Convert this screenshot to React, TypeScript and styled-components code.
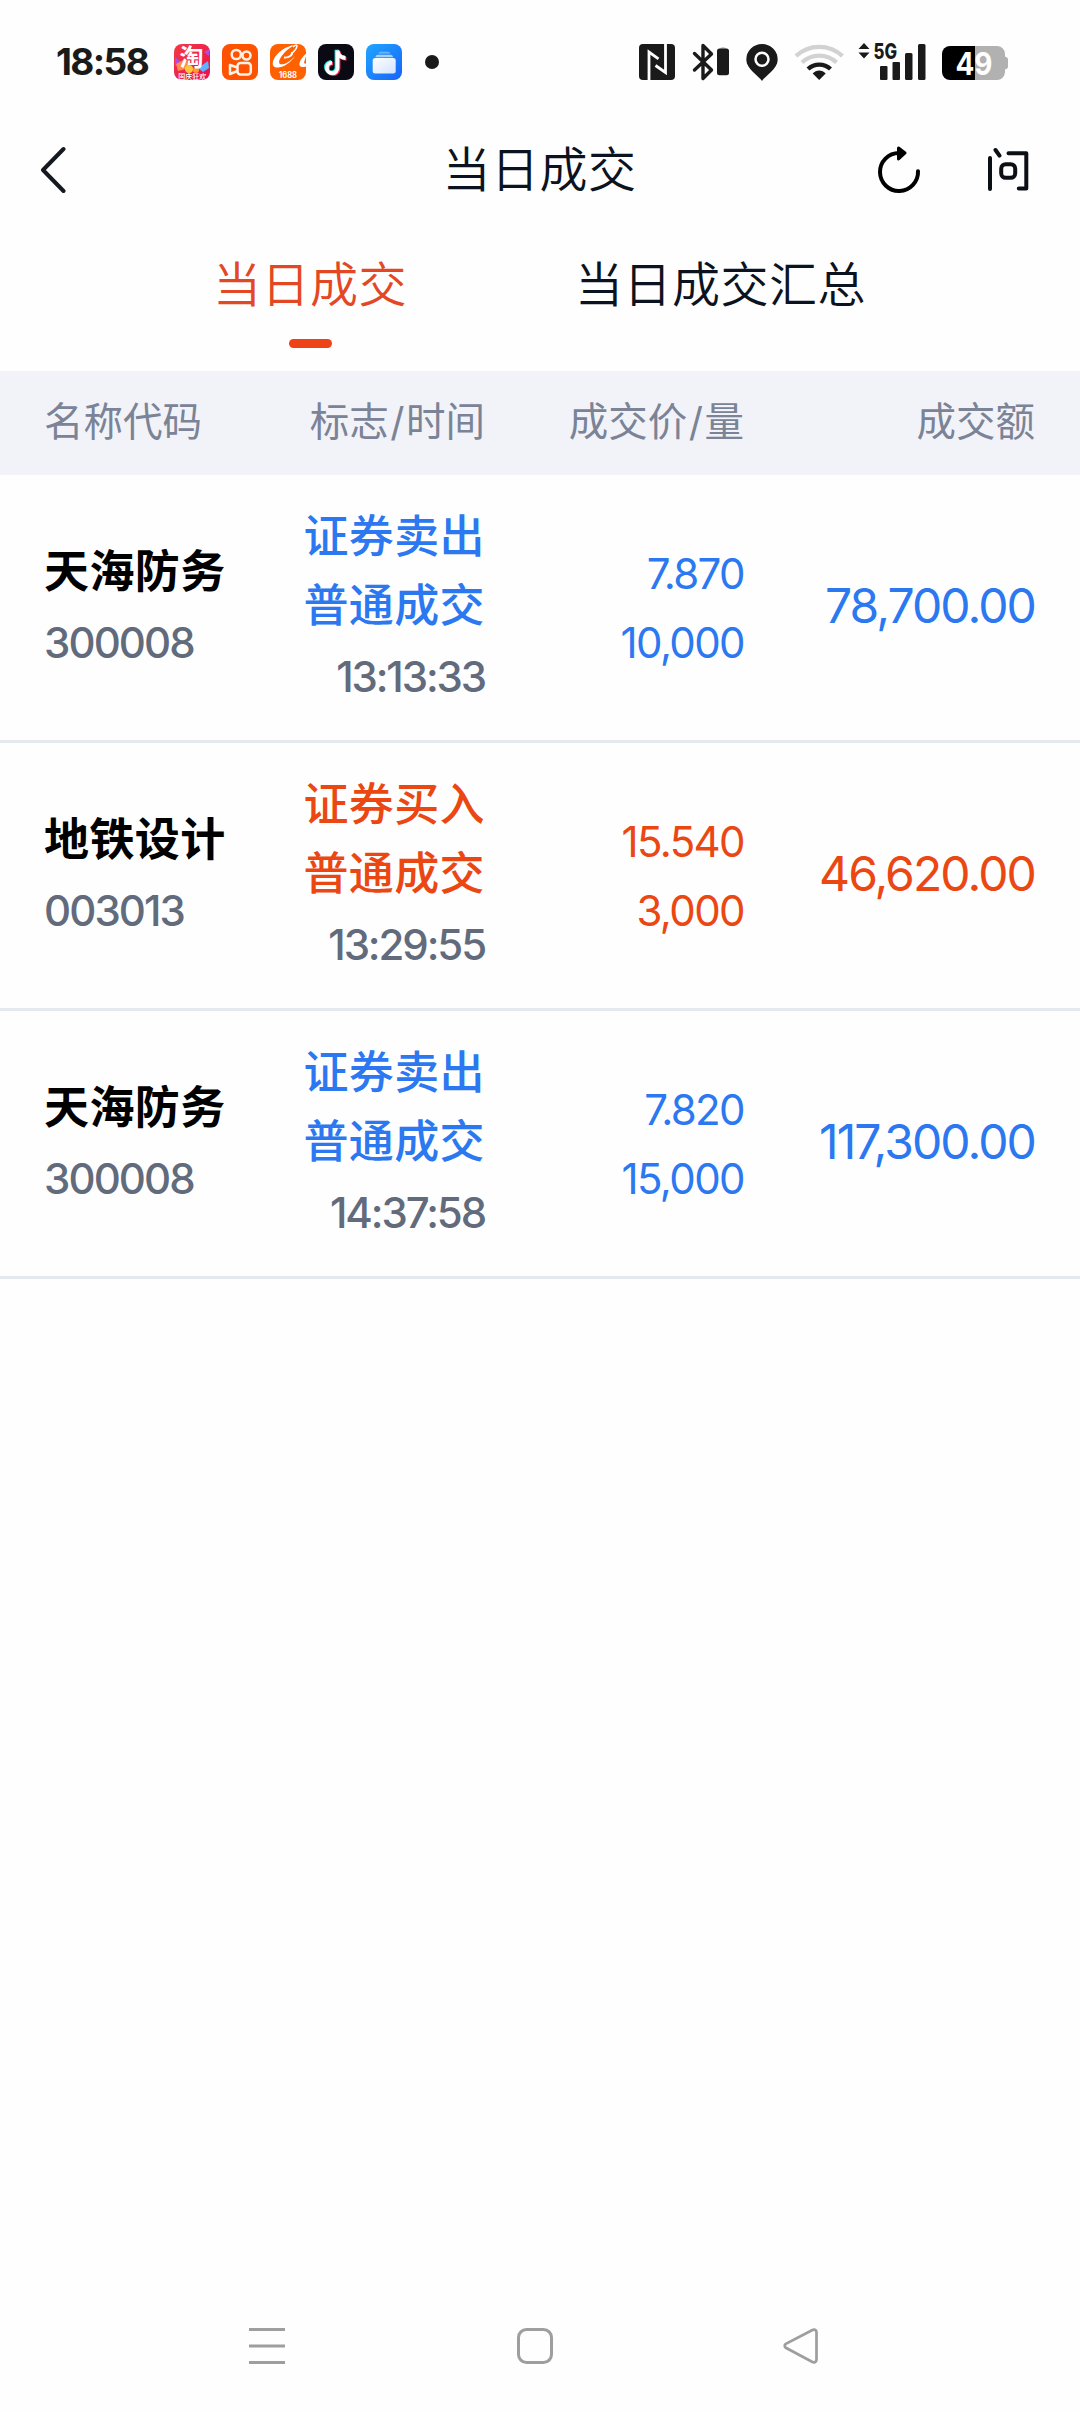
import React from "react";
import styled, { createGlobalStyle } from "styled-components";

const GlobalStyle = createGlobalStyle`
  *, *::before, *::after { box-sizing: border-box; }
  body {
    margin: 0;
    background: #fefefe;
    color: #0c1320;
    font-family: Inter, "Noto Sans CJK SC", sans-serif;
  }
  svg { display: block; flex: none; }
  button { border: 0; padding: 0; background: none; font: inherit; color: inherit; }
`;

const BLUE = "#2b78f0";
const ORANGE = "#ea4713";

const Screen = styled.div`
  display: flex;
  flex-direction: column;
  width: 1080px;
  height: 2412px;
  overflow: hidden;
`;

const StatusBar = styled.header`
  display: flex;
  justify-content: space-between;
  align-items: center;
  height: 124px;
  padding: 0 72px 0 56px;
  color: #1a1a1a;
`;

const StatusGroup = styled.div`
  display: flex;
  align-items: center;
`;

const Clock = styled.span`
  width: 118px;
  font-size: 37px;
  line-height: 44px;
  font-weight: 650;
  letter-spacing: -1.6px;
  white-space: nowrap;
`;

const AppIcons = styled.div`
  display: flex;
  align-items: center;
  gap: 12px;
`;

const MoreDot = styled.i`
  width: 14px;
  height: 14px;
  margin-left: 23px;
  border-radius: 50%;
  background: #1a1a1a;
`;

const TitleBar = styled.div`
  display: grid;
  grid-template-columns: 1fr auto 1fr;
  align-items: center;
  height: 92px;
  padding: 0 50px 0 40px;
`;

const Title = styled.h1`
  margin: 0;
  padding-left: 9px;
  font-size: 48px;
  line-height: 72px;
  font-weight: 350;
  letter-spacing: 0.5px;
`;

const Actions = styled.div`
  display: flex;
  justify-content: flex-end;
  gap: 65px;
`;

const Tabs = styled.nav`
  display: flex;
  justify-content: space-between;
  height: 155px;
  padding: 33px 214px 0 213px;
`;

const Tab = styled.button<{ $active?: boolean }>`
  display: flex;
  flex-direction: column;
  align-items: center;
  height: 110px;
  color: ${(p) => (p.$active ? "#e34824" : "#0c1320")};
  font-size: 48px;
  line-height: 72px;
  font-weight: 350;
  letter-spacing: 0.5px;

  &::after {
    content: "";
    width: 43px;
    height: 9px;
    margin-top: 18px;
    border-radius: 5px;
    background: ${(p) => (p.$active ? "#ee4219" : "transparent")};
  }
`;

const rowGrid = `
  display: grid;
  grid-template-columns: 182px 259px 259px 291px;
  align-items: center;
  padding: 0 45px 0 44px;
`;

const TableHead = styled.div`
  ${rowGrid}
  height: 104px;
  padding-bottom: 3px;
  background: #f2f3f8;
  color: #7b8397;
  font-size: 39.5px;
  line-height: 60px;
`;

const HeadCell = styled.span<{ $right?: boolean }>`
  text-align: ${(p) => (p.$right ? "right" : "left")};
  white-space: nowrap;
`;

const Slash = styled.span`
  padding: 0 1.5px;
`;

const TradeRow = styled.div`
  ${rowGrid}
  height: 268px;
  border-bottom: 3px solid #e5e8ec;
`;

const Cell = styled.div<{ $right?: boolean; $color?: string }>`
  display: flex;
  flex-direction: column;
  align-items: ${(p) => (p.$right ? "flex-end" : "flex-start")};
  color: ${(p) => p.$color ?? "#626b7c"};
  white-space: nowrap;
`;

const Name = styled.span`
  padding-bottom: 3px;
  color: #000;
  font-size: 45px;
  line-height: 66px;
  font-weight: 700;
  letter-spacing: 0.4px;
`;

const Kind = styled.span<{ $color: string }>`
  padding-bottom: 3px;
  color: ${(p) => p.$color};
  font-size: 45px;
  line-height: 66px;
  font-weight: 500;
  letter-spacing: 0.4px;
`;

const Figure = styled.span`
  font-size: 42px;
  line-height: 69px;
  letter-spacing: -1.6px;
`;

const Code = styled(Figure)`
  font-weight: 450;
  letter-spacing: -1.9px;
`;

const Time = styled(Figure)`
  font-weight: 450;
  letter-spacing: -2.1px;
`;

const Amount = styled.span`
  padding-bottom: 4px;
  font-size: 48px;
  line-height: 69px;
  letter-spacing: -1.9px;
`;

const NavBar = styled.footer`
  display: flex;
  align-items: center;
  justify-content: space-between;
  height: 132px;
  margin-top: auto;
  padding: 0 261px 0 248px;
`;

const TaobaoIcon = () => (
  <svg width="36" height="36" viewBox="0 0 36 36">
    <defs>
      <linearGradient id="tb" x1="0" y1="0" x2="1" y2="1">
        <stop offset="0" stopColor="#f23a45" />
        <stop offset="1" stopColor="#e8104f" />
      </linearGradient>
    </defs>
    <rect width="36" height="36" rx="8" fill="url(#tb)" />
    <path d="M1 13l6 5-6 4zM30 8l5-3v7z" fill="#b04be0" />
    <path d="M2 20l9-5 5 9-12 3z" fill="#ff8a4a" />
    <path d="M24 24l10-7 1 7-6 4z" fill="#5bb4ff" />
    <circle cx="15" cy="25" r="4" fill="#ffc63c" />
    <circle cx="22" cy="26" r="3" fill="#ff9a2e" />
    <text x="17.500" y="22" textAnchor="middle" fontSize="24" fontWeight="700" fill="#fff">淘</text>
    <text x="18.300" y="34.500" textAnchor="middle" fontSize="7" fontWeight="500" fill="#fff">国庆狂欢</text>
  </svg>
);

const KuaishouIcon = () => (
  <svg width="36" height="36" viewBox="0 0 36 36">
    <rect width="36" height="36" rx="8" fill="#ff5200" />
    <g fill="none" stroke="#fff2e4" strokeWidth="2.500" strokeLinejoin="round">
      <circle cx="14.300" cy="10.500" r="4.600" />
      <circle cx="24.500" cy="11.500" r="4" />
      <rect x="15.500" y="19" width="13.300" height="11.500" rx="3" />
      <path d="M15.500 23.500L8 21v9l7.500-3" />
    </g>
  </svg>
);

const AlibabaIcon = () => (
  <svg width="36" height="36" viewBox="0 0 36 36">
    <defs>
      <clipPath id="ali"><rect width="36" height="36" rx="8" /></clipPath>
    </defs>
    <g clipPath="url(#ali)">
      <rect width="36" height="36" fill="#ff6000" />
      <path d="M25 1C16 2 7 8 3.500 16c-2 5 0 8 5 7.500C15 23 22 17 25 12c-4 5-10 8.500-13.500 8.300-3 0-3-3-1-6.300C13.500 9 19 3.500 25 1z" fill="#fff" />
      <path d="M14 13.500c5 .5 9-2.500 8-5.500" fill="none" stroke="#fff" strokeWidth="1.800" />
      <path d="M37 9c-5 4-8 9-7.500 12 .5 2.500 4 2.500 8 1v-3c-3 1.500-4 .5-3-2z" fill="#fff" />
      <path d="M23 3c2-2 4-2.500 4-1 0 2-3 6-6 8" fill="none" stroke="#fff" strokeWidth="1.500" />
    </g>
    <text x="18" y="34" textAnchor="middle" fontSize="8.600" fontWeight="700" fill="#fff" textLength="18" lengthAdjust="spacingAndGlyphs">1688</text>
  </svg>
);

const note = "M19.500 6.500v17.300a5.300 5.300 0 1 1-5.500-5.200M19.500 6.500c.7 4.800 3.800 7.300 8 7.500";
const DouyinIcon = () => (
  <svg width="36" height="36" viewBox="0 0 36 36">
    <rect width="36" height="36" rx="8" fill="#0b0a14" />
    <g fill="none" strokeWidth="3.800">
      <path d={note} stroke="#25e8e2" transform="translate(-1 -0.800)" />
      <path d={note} stroke="#fb3158" transform="translate(1 0.800)" />
      <path d={note} stroke="#fff" />
    </g>
  </svg>
);

const CardsIcon = () => (
  <svg width="36" height="36" viewBox="0 0 36 36">
    <defs>
      <linearGradient id="cb" x1="0" y1="0" x2="1" y2="1">
        <stop offset="0" stopColor="#1fa6ff" />
        <stop offset="1" stopColor="#1763f8" />
      </linearGradient>
      <linearGradient id="cw" x1="0" y1="0" x2="1" y2="1">
        <stop offset="0" stopColor="#fff" />
        <stop offset="1" stopColor="#d2e3ff" />
      </linearGradient>
    </defs>
    <rect width="36" height="36" rx="8" fill="url(#cb)" />
    <path d="M12.500 9.500c0-1 .8-1.800 1.800-1.800h8c1 0 1.800.8 1.800 1.800z" fill="#6db7ff" />
    <path d="M9.500 13.200c0-1.500 1-2.500 2.500-2.500h12.500c1.500 0 2.500 1 2.500 2.500z" fill="#a4d2ff" />
    <rect x="6.700" y="14" width="23" height="15.500" rx="2.500" fill="url(#cw)" />
  </svg>
);

const StatusIcons = () => (
  <svg width="369" height="64" viewBox="639 30 369 64">
    <rect x="639" y="44" width="36" height="36" rx="4" fill="#1a1a1a" />
    <path d="M649 80V52l9.500 6.800M665.500 44v28.500l-10-7" fill="none" stroke="#fff" strokeWidth="2.800" />
    <path d="M694.500 53.500l17 16.500-8.500 8.500V45.500l8.500 8.500-17 16" fill="none" stroke="#1a1a1a" strokeWidth="3.400" strokeLinecap="round" strokeLinejoin="round" />
    <path d="M720 48.500c0-1.500 6-1.500 6 0z" fill="#999" />
    <rect x="717" y="48.500" width="12" height="26.800" rx="2.500" fill="#1a1a1a" />
    <path d="M762 81c-3-5-15.700-12-15.700-21.300a15.700 15.700 0 0 1 31.400 0C777.700 69 765 76 762 81z" fill="#1a1a1a" />
    <circle cx="762" cy="59.300" r="6.500" fill="none" stroke="#fff" strokeWidth="2.500" />
    <g fill="none" strokeWidth="4.300">
      <path d="M796 56a34 34 0 0 1 46.500 0" stroke="#d2d2d2" />
      <path d="M802 62.500a25 25 0 0 1 34.500 0" stroke="#d2d2d2" />
      <path d="M808 69a16.500 16.500 0 0 1 22.500 0" stroke="#1a1a1a" />
    </g>
    <path d="M819.200 80l-6.500-6.500c3.500-4 9.500-4 13 0z" fill="#1a1a1a" />
    <path d="M864 43l5.500 6h-11zM864 58.500l5.500-6h-11z" fill="#1a1a1a" />
    <text x="873.500" y="59" fontSize="21" fontWeight="800" fill="#1a1a1a" textLength="23.500" lengthAdjust="spacingAndGlyphs">5G</text>
    <g fill="#1a1a1a">
      <rect x="880" y="66" width="7.500" height="14" rx="1" />
      <rect x="892.500" y="62" width="7.500" height="18" rx="1" />
      <rect x="905" y="53" width="7.500" height="27" rx="1.500" />
      <rect x="918" y="44" width="7.500" height="36" rx="1.500" />
    </g>
    <path d="M975 46h22a8 8 0 0 1 8 8v2.500c2 .5 3 1.500 3 3v7c0 1.500-1 2.500-3 3V72a8 8 0 0 1-8 8h-22z" fill="#b1b1b1" />
    <path d="M975 46h-25a8 8 0 0 0-8 8v18a8 8 0 0 0 8 8h25z" fill="#000" />
    <text x="974" y="74.500" textAnchor="middle" fontSize="31" fontWeight="700" fill="#fff" textLength="37" lengthAdjust="spacingAndGlyphs">49</text>
  </svg>
);

const BackIcon = () => (
  <svg width="26" height="48" viewBox="0 0 26 48">
    <path d="M23.500 3L3 24l20.500 21" fill="none" stroke="#14181f" strokeWidth="4" strokeLinecap="round" strokeLinejoin="round" />
  </svg>
);

const RefreshIcon = () => (
  <svg width="44" height="48" viewBox="0 0 44 48">
    <path d="M41 25.200a19 19 0 1 1-19-18.200h3" fill="none" stroke="#000" strokeWidth="4" strokeLinecap="round" />
    <path d="M21.500 2l6.500 5-6.500 6z" fill="#000" stroke="#000" strokeWidth="3" strokeLinejoin="round" />
  </svg>
);

const AskIcon = () => (
  <svg width="44" height="48" viewBox="0 0 44 48">
    <g fill="none" stroke="#0c0f14" strokeWidth="4" strokeLinecap="round" strokeLinejoin="round">
      <path d="M4 12v31M9.500 4l4 5.700M22.500 7.300h17.800v35.200h-7.500" />
      <rect x="15.200" y="18.200" width="14" height="13.600" rx="4.500" />
    </g>
  </svg>
);

const MenuIcon = () => (
  <svg width="38" height="38" viewBox="0 0 38 38">
    <path d="M1 2.500h36M1 19h36M1 35.500h36" stroke="#9e9e9e" strokeWidth="3" />
  </svg>
);

const HomeIcon = () => (
  <svg width="38" height="38" viewBox="0 0 38 38">
    <rect x="2.500" y="2.500" width="33" height="33" rx="8" fill="none" stroke="#9e9e9e" strokeWidth="3" />
  </svg>
);

const TriangleIcon = () => (
  <svg width="36" height="38" viewBox="0 0 36 38">
    <path d="M29 3.200L2.800 16.800c-1.500 1-1.500 3 0 4L29 34.800c2 1 4.500.5 4.500-2V5.200c0-2.500-2.500-3-4.500-2z" fill="none" stroke="#9e9e9e" strokeWidth="2.700" />
  </svg>
);

type Trade = {
  name: string;
  code: string;
  side: string;
  time: string;
  price: string;
  quantity: string;
  amount: string;
  buy?: boolean;
};

const trades: Trade[] = [
  { name: "天海防务", code: "300008", side: "证券卖出", time: "13:13:33", price: "7.870", quantity: "10,000", amount: "78,700.00" },
  { name: "地铁设计", code: "003013", side: "证券买入", time: "13:29:55", price: "15.540", quantity: "3,000", amount: "46,620.00", buy: true },
  { name: "天海防务", code: "300008", side: "证券卖出", time: "14:37:58", price: "7.820", quantity: "15,000", amount: "117,300.00" },
];

export default function App() {
  return (
    <Screen>
      <GlobalStyle />
      <StatusBar>
        <StatusGroup>
          <Clock>18:58</Clock>
          <AppIcons>
            <TaobaoIcon />
            <KuaishouIcon />
            <AlibabaIcon />
            <DouyinIcon />
            <CardsIcon />
          </AppIcons>
          <MoreDot />
        </StatusGroup>
        <StatusIcons />
      </StatusBar>
      <TitleBar>
        <button aria-label="返回"><BackIcon /></button>
        <Title>当日成交</Title>
        <Actions>
          <button aria-label="刷新"><RefreshIcon /></button>
          <button aria-label="问"><AskIcon /></button>
        </Actions>
      </TitleBar>
      <Tabs>
        <Tab $active>当日成交</Tab>
        <Tab>当日成交汇总</Tab>
      </Tabs>
      <TableHead>
        <HeadCell>名称代码</HeadCell>
        <HeadCell $right>标志<Slash>/</Slash>时间</HeadCell>
        <HeadCell $right>成交价<Slash>/</Slash>量</HeadCell>
        <HeadCell $right>成交额</HeadCell>
      </TableHead>
      {trades.map((t) => {
        const color = t.buy ? ORANGE : BLUE;
        return (
          <TradeRow key={t.time}>
            <Cell>
              <Name>{t.name}</Name>
              <Code>{t.code}</Code>
            </Cell>
            <Cell $right>
              <Kind $color={color}>{t.side}</Kind>
              <Kind $color={color}>普通成交</Kind>
              <Time>{t.time}</Time>
            </Cell>
            <Cell $right $color={color}>
              <Figure>{t.price}</Figure>
              <Figure>{t.quantity}</Figure>
            </Cell>
            <Cell $right $color={color}>
              <Amount>{t.amount}</Amount>
            </Cell>
          </TradeRow>
        );
      })}
      <NavBar>
        <MenuIcon />
        <HomeIcon />
        <TriangleIcon />
      </NavBar>
    </Screen>
  );
}
